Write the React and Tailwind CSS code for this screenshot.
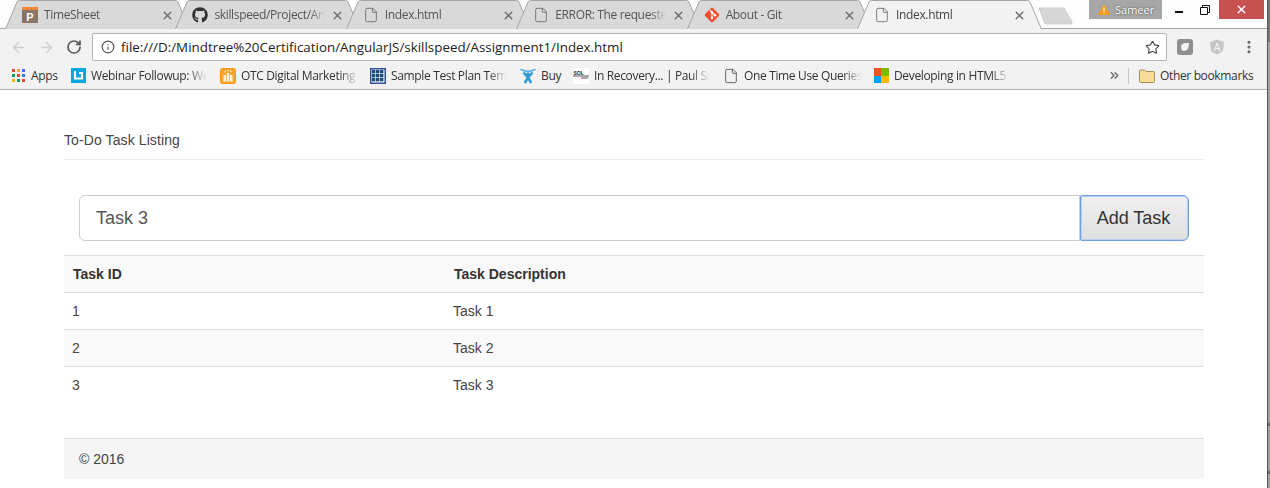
import React from "react";
import { ArrowLeft, ArrowRight, RotateCw, Info, Star, X, File, EllipsisVertical, ChevronsRight } from "lucide-react";
import { FaGithub } from "react-icons/fa";

const TimeSheetIcon = () => (
  <svg width="16" height="16" viewBox="0 0 16 16">
    <rect width="16" height="16" fill="#8a7367" />
    <rect width="16" height="3" fill="#f0853a" />
    <text x="8" y="13.5" textAnchor="middle" fontSize="11" fontWeight="700" fill="#fff" fontFamily="Liberation Sans">P</text>
  </svg>
);

const GitIcon = () => (
  <svg width="16" height="16" viewBox="0 0 16 16">
    <rect x="2.4" y="2.4" width="11.2" height="11.2" rx="1.4" fill="#f05133" transform="rotate(45 8 8)" />
    <path d="M5.6 2.8 L8 5.2 M8 5.2 V11 M8 5.2 L11 8.2" stroke="#fff" strokeWidth="1.2" fill="none" />
    <circle cx="8" cy="5.2" r="1.2" fill="#fff" />
    <circle cx="8" cy="11" r="1.2" fill="#fff" />
    <circle cx="11" cy="8.2" r="1.2" fill="#fff" />
  </svg>
);

const DocIcon = () => <File size={16} strokeWidth={1.2} color="#5f5f5f" />;

const tabs = [
  { title: "TimeSheet", icon: <TimeSheetIcon /> },
  { title: "skillspeed/Project/AngularJS", icon: <FaGithub size={16} color="#333" /> },
  { title: "Index.html", icon: <DocIcon /> },
  { title: "ERROR: The requested URL", icon: <DocIcon /> },
  { title: "About - Git", icon: <GitIcon /> },
  { title: "Index.html", icon: <DocIcon />, active: true },
];

const Tab = ({ title, icon, active }) => (
  <div className="relative w-[185px] h-[29px] shrink-0 -mr-[14.6px] flex items-center">
    <svg className="absolute inset-0" width="185" height="29" viewBox="0 0 185 29">
      <path
        d="M0.5 29 L12 2 Q12.8 0.5 14.5 0.5 L170.5 0.5 Q172.2 0.5 173 2 L184.5 29"
        fill={active ? "#f2f2f2" : "#d9d9d9"}
        stroke="#a6a6a6"
      />
    </svg>
    <div className="relative flex items-center w-full pl-[17px] pr-[16px] pt-[1px]">
      <span className="w-4 h-4 shrink-0 flex items-center justify-center">{icon}</span>
      <span className={`ml-[6px] w-[111px] whitespace-nowrap overflow-hidden text-[12px] leading-4 tracking-[-0.35px] ${active ? "text-[#444]" : "text-[#555]"} [mask-image:linear-gradient(to_right,black_86%,transparent)]`}>
        {title}
      </span>
      <X size={13} strokeWidth={2.6} color="#6b6b6b" className="ml-auto shrink-0" />
    </div>
  </div>
);

const AppsIcon = () => {
  const c = ["#e8453c", "#f4b400", "#3b78e7", "#0f9d58", "#e8453c", "#3b78e7", "#f4b400", "#0f9d58", "#e8453c"];
  return (
    <span className="w-[13px] h-[13px] grid grid-cols-3 gap-[2px]">
      {c.map((x, i) => (
        <span key={i} style={{ background: x }} />
      ))}
    </span>
  );
};

const WebinarIcon = () => (
  <svg width="15" height="15" viewBox="0 0 15 15">
    <rect width="15" height="15" fill="#10a5e0" />
    <path d="M4 3 V10.5 H11 V5 H8" stroke="#fff" strokeWidth="2" fill="none" />
  </svg>
);

const OtcIcon = () => (
  <svg width="16" height="16" viewBox="0 0 16 16">
    <rect x="0.5" y="0.5" width="15" height="15" rx="2" fill="#fba52c" stroke="#f0941c" />
    <path d="M3.5 7 H6.2 V13.5 H3.5 Z M6.8 5 H9.2 V13.5 H6.8 Z M9.8 7 H12.5 V13.5 H9.8 Z" fill="#fff2d8" />
    <path d="M4.5 3 H6 V4.5 H4.5 Z M10 2.5 H11.5 V4 H10 Z M7.4 2 H8.6 V3.2 H7.4 Z" fill="#fff2d8" />
  </svg>
);

const GridIcon = () => (
  <svg width="16" height="16" viewBox="0 0 16 16">
    <rect width="16" height="16" fill="#2f4f96" />
    <rect x="1.5" y="1.5" width="13" height="13" fill="#fff" />
    {[2, 6, 10].flatMap((x) =>
      [2, 6, 10].map((y) => <rect key={`${x}-${y}`} x={x} y={y} width="3.4" height="3.4" fill="#1d4d7a" />)
    )}
  </svg>
);

const BuyIcon = () => (
  <svg width="16" height="16" viewBox="0 0 16 16">
    <path d="M0.5 1.2 Q8 5.5 15.5 1.2" fill="none" stroke="#5cb4e2" strokeWidth="1.6" />
    <circle cx="8" cy="6" r="1.7" fill="#2f9bd0" />
    <path d="M3.5 4.5 L8 9.5 L12.5 4.5 M8 9.5 L4.8 15 M8 9.5 L11.2 15" fill="none" stroke="#2f9bd0" strokeWidth="2.6" />
  </svg>
);

const SolIcon = () => (
  <svg width="16" height="16" viewBox="0 0 16 16">
    <rect width="16" height="16" fill="#fff" />
    <text x="0.5" y="7" fontSize="5" fontWeight="700" fill="#222" fontFamily="Liberation Sans">SOL</text>
    <rect x="0" y="7.5" width="16" height="1" fill="#555" />
    <rect x="8" y="9" width="7" height="2" fill="#aaa" />
  </svg>
);

const MsIcon = () => (
  <span className="w-[15px] h-[15px] grid grid-cols-2 gap-0">
    <span className="bg-[#f25022]" />
    <span className="bg-[#7fba00]" />
    <span className="bg-[#00a4ef]" />
    <span className="bg-[#ffb900]" />
  </span>
);

const FolderIcon = () => (
  <svg width="16" height="14" viewBox="0 0 16 14">
    <path d="M0.5 2 Q0.5 1 1.5 1 H5.5 L7 2.5 H14.5 Q15.5 2.5 15.5 3.5 V12.5 Q15.5 13.5 14.5 13.5 H1.5 Q0.5 13.5 0.5 12.5 Z" fill="#f8dc9a" stroke="#a98e56" />
  </svg>
);

const Bookmark = ({ icon, label, textClass, className }) => (
  <div className={`flex items-center shrink-0 ${className}`}>
    <span className="w-4 h-4 flex items-center justify-center shrink-0">{icon}</span>
    <span className={`ml-[5px] whitespace-nowrap overflow-hidden text-[12px] leading-4 tracking-[-0.35px] text-[#333] ${textClass}`}>{label}</span>
  </div>
);

const fade = "[mask-image:linear-gradient(to_right,black_84%,transparent)]";

const bookmarks = [
  { icon: <AppsIcon />, label: "Apps", textClass: "w-[28px]", className: "w-[60px]" },
  { icon: <WebinarIcon />, label: "Webinar Followup: Webinar", textClass: `w-[116px] ${fade}`, className: "w-[150px]" },
  { icon: <OtcIcon />, label: "OTC Digital Marketing Plan", textClass: `w-[117px] ${fade}`, className: "w-[150px]" },
  { icon: <GridIcon />, label: "Sample Test Plan Template", textClass: `w-[116px] ${fade}`, className: "w-[150px]" },
  { icon: <BuyIcon />, label: "Buy", textClass: "w-[22px]", className: "w-[53px]" },
  { icon: <SolIcon />, label: "In Recovery... | Paul Smith", textClass: `w-[115px] ${fade}`, className: "w-[150px]" },
  { icon: <File size={16} strokeWidth={1.2} color="#444" />, label: "One Time Use Queries", textClass: `w-[118px] ${fade}`, className: "w-[150px]" },
  { icon: <MsIcon />, label: "Developing in HTML5 with", textClass: `w-[115px] ${fade}`, className: "w-[140px]" },
];

export default function App() {
  return (
    <div className="w-[1270px] h-[488px] overflow-hidden flex bg-white font-['Liberation_Sans',Arial,sans-serif] text-[#333]">
      <div className="w-[1267px] shrink-0 flex flex-col">
        {/* tab strip */}
        <div className="h-[29px] flex border-b border-[#a6a6a6] bg-[#fdfdfd] font-['Open_Sans',sans-serif]">
          <div className="flex pl-[5px]">
            {tabs.map((t, i) => (
              <Tab key={i} {...t} />
            ))}
          </div>
          <svg className="ml-[10.6px] mt-[7px] shrink-0" width="35" height="18" viewBox="0 0 35 18">
            <path d="M1 1 H26 L34 15 Q34.5 17 33 17 H7 Z" fill="#d6d6d6" stroke="#cfcfcf" />
          </svg>
          <div className="ml-[16px] w-[73px] h-[19px] bg-[#a6a6a6] flex items-center pl-[9px] shrink-0">
            <svg width="12" height="11" viewBox="0 0 11 10">
              <path d="M5.5 0 L11 10 H0 Z" fill="#f09a15" />
              <rect x="5" y="3" width="1" height="4" fill="#fff" />
              <rect x="5" y="8" width="1" height="1" fill="#fff" />
            </svg>
            <span className="ml-[5px] text-[11px] leading-[18px] text-white [text-shadow:0_0_2px_#333]">Sameer</span>
          </div>
          <div className="flex-1 flex items-start h-[19px]">
            <span className="ml-[13px] mt-[11px] w-[8px] h-[2px] bg-[#111]" />
            <svg className="ml-[17px] mt-[5px]" width="10" height="10" viewBox="0 0 10 10">
              <path d="M0.5 2.5 H7.5 V9.5 H0.5 Z M2.5 2.5 V0.5 H9.5 V7.5 H7.5" fill="none" stroke="#111" />
            </svg>
            <div className="ml-[9px] w-[45px] h-[19px] bg-[#c75050] flex items-center justify-center">
              <X size={13} strokeWidth={2.5} color="#fff" />
            </div>
          </div>
        </div>

        {/* toolbar */}
        <div className="h-[33px] bg-[#f2f2f2] flex items-center pl-[10px] pt-[3px] font-['Open_Sans',sans-serif]">
          <ArrowLeft size={17} strokeWidth={2} color="#d0d0d0" />
          <ArrowRight size={17} strokeWidth={2} color="#d0d0d0" className="ml-[11px]" />
          <RotateCw size={16} strokeWidth={2.6} color="#5a5a5a" className="ml-[11px]" />
          <div className="ml-[10px] w-[1075px] h-[28px] bg-white border border-[#b4b4b4] rounded-[2px] flex items-center pl-[8px] pr-[6px]">
            <Info size={14} strokeWidth={2} color="#555" />
            <span className="ml-[6px] text-[13.38px] leading-5 text-[#222] whitespace-nowrap">
              file:///D:/Mindtree%20Certification/AngularJS/skillspeed/Assignment1/Index.html
            </span>
            <Star size={15} strokeWidth={1.8} color="#444" className="ml-auto" />
          </div>
          <svg className="ml-[10px]" width="16" height="16" viewBox="0 0 16 16">
            <rect width="16" height="16" rx="3" fill="#8f8f8f" />
            <path d="M4 8 Q4 4 9 4 L12 4 Q12 12 7 12 Q4 12 4 8 Z" fill="#f2f2f2" />
          </svg>
          <svg className="ml-[16px]" width="16" height="16" viewBox="0 0 16 16">
            <path d="M8 0.5 L15 3 L14 12 L8 15.5 L2 12 L1 3 Z" fill="#c6c6c6" />
            <text x="8" y="12" textAnchor="middle" fontSize="10" fill="#f2f2f2" fontFamily="Liberation Sans">A</text>
          </svg>
          <EllipsisVertical size={16} strokeWidth={2.6} color="#666" className="ml-[16px]" />
        </div>

        {/* bookmarks */}
        <div className="h-[28px] bg-[#f2f2f2] border-b border-[#b4b4b4] flex items-center pl-[10px] font-['Open_Sans',sans-serif]">
          {bookmarks.map((b, i) => (
            <Bookmark key={i} {...b} />
          ))}
          <ChevronsRight size={13} strokeWidth={2.4} color="#666" className="ml-[95px]" />
          <span className="ml-[7px] w-px h-[16px] bg-[#c8c8c8]" />
          <span className="ml-[10px]"><FolderIcon /></span>
          <span className="ml-[5px] text-[12px] leading-4 tracking-[-0.35px] text-[#333] whitespace-nowrap">Other bookmarks</span>
        </div>

        {/* page */}
        <div className="ml-[64px] w-[1140px] flex flex-col">
          <div className="pt-[40px] pb-[9px] border-b border-[#eeeeee] text-[14px] leading-5 tracking-[0.1px] text-[#444]">To-Do Task Listing</div>

          <div className="mt-[35px] mx-[15px] flex h-[46px]">
            <div className="flex-1 border border-[#cccccc] rounded-l-[6px] bg-white flex items-center pl-[16px] text-[18px] text-[#555]">Task 3</div>
            <div className="w-[109px] pr-[2px] rounded-r-[6px] rounded-l-[2px] border border-[#6f9de2] shadow-[inset_0_0_0_1px_#b9cfee] bg-gradient-to-b from-[#f0f0f0] to-[#dfdfdf] flex items-center justify-center text-[18px] text-[#333]">Add Task</div>
          </div>

          <table className="mt-[14px] w-[1140px] table-fixed border-separate border-spacing-0 text-[14px] text-[#333]">
            <colgroup>
              <col className="w-[381px]" />
              <col />
            </colgroup>
            <thead>
              <tr className="bg-[#f9f9f9]">
                <th className="h-[37px] p-0 pl-[9px] text-left font-bold border-t border-[#dddddd]">Task ID</th>
                <th className="h-[37px] p-0 pl-[9px] text-left font-bold border-t border-[#dddddd]">Task Description</th>
              </tr>
            </thead>
            <tbody>
              {[1, 2, 3].map((n) => (
                <tr key={n} className={n === 2 ? "bg-[#f9f9f9]" : "bg-white"}>
                  <td className="h-[37px] p-0 pl-2 border-t border-[#dddddd] text-[#444]">{n}</td>
                  <td className="h-[37px] p-0 pl-2 border-t border-[#dddddd] text-[#444]">Task {n}</td>
                </tr>
              ))}
            </tbody>
          </table>

          <div className="mt-[35px] h-[41px] border-t border-[#dddddd] bg-[#f5f5f5] rounded-b-[3px] pl-[15px] flex items-center text-[14px] text-[#444]">© 2016</div>
        </div>
      </div>

      {/* right edge of window behind */}
      <div className="w-[3px] shrink-0 border-l border-[#555555] flex flex-col">
        <div className="h-[42px] bg-[#777777]" />
        <div className="h-[381px] bg-[#a3a3a3]" />
        <div className="h-[3px] bg-[#666666]" />
        <div className="h-[45px] bg-[#a3a3a3]" />
        <div className="h-[3px] bg-[#666666]" />
        <div className="flex-1 bg-[#a3a3a3]" />
      </div>
    </div>
  );
}
